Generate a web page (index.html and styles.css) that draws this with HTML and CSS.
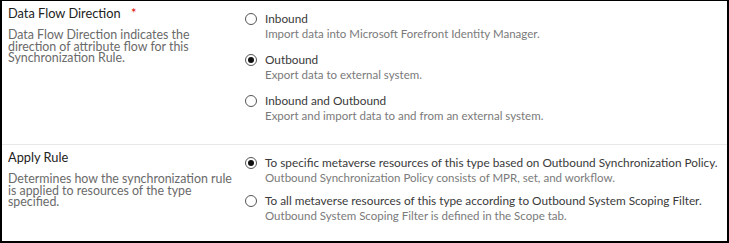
FILE: index.html
```html
<!DOCTYPE html>
<html lang="en">
<head>
    <meta charset="UTF-8">
    <title>Synchronization Rule - Scope</title>
    <link rel="stylesheet" href="styles.css">
</head>
<body>
<div class="panel">

    <div class="row row-first">
        <div class="info">
            <div class="title">Data Flow Direction <span class="req">*</span></div>
            <div class="desc">Data Flow Direction indicates the direction of attribute flow for this Synchronization Rule.</div>
        </div>
        <div class="options">
            <label class="option">
                <input type="radio" name="flow">
                <span class="option-text">
                    <span class="option-label">Inbound</span>
                    <span class="option-desc">Import data into Microsoft Forefront Identity Manager.</span>
                </span>
            </label>
            <label class="option">
                <input type="radio" name="flow" checked>
                <span class="option-text">
                    <span class="option-label">Outbound</span>
                    <span class="option-desc">Export data to external system.</span>
                </span>
            </label>
            <label class="option">
                <input type="radio" name="flow">
                <span class="option-text">
                    <span class="option-label">Inbound and Outbound</span>
                    <span class="option-desc">Export and import data to and from an external system.</span>
                </span>
            </label>
        </div>
    </div>

    <div class="row row-last">
        <div class="info">
            <div class="title">Apply Rule</div>
            <div class="desc">Determines how the synchronization rule is applied to resources of the type specified.</div>
        </div>
        <div class="options compact">
            <label class="option">
                <input type="radio" name="apply" checked>
                <span class="option-text">
                    <span class="option-label">To specific metaverse resources of this type based on Outbound Synchronization Policy.</span>
                    <span class="option-desc">Outbound Synchronization Policy consists of MPR, set, and workflow.</span>
                </span>
            </label>
            <label class="option">
                <input type="radio" name="apply">
                <span class="option-text">
                    <span class="option-label">To all metaverse resources of this type according to Outbound System Scoping Filter.</span>
                    <span class="option-desc">Outbound System Scoping Filter is defined in the Scope tab.</span>
                </span>
            </label>
        </div>
    </div>

</div>
</body>
</html>
```

FILE: styles.css
```css
body {
    margin: 0;
    padding: 0;
    background-color: #fff;
    font-family: "Segoe UI", Lato, Arial, sans-serif;
    font-size: 11.5px;
}

.panel {
    width: 725px;
    height: 240px;
    border: 2px solid #000;
    border-top-width: 1px;
    background-color: #fff;
}

/* one setting per row */
.row {
    display: flex;
    padding: 5px 0 0 6px;
    border-bottom: 1px solid #e8e8e8;
}
.row-first {
    height: 138px;
}
.row-last {
    border-bottom: none;
}

.info {
    width: 228px;
    flex-shrink: 0;
}
.title {
    color: #222;
    font-size: 12.8px;
    line-height: 14px;
}
.req {
    color: #e00000;
    margin-left: 7px;
}
.desc {
    color: #6a6a6a;
    font-size: 12.4px;
    margin-top: 9px;
    line-height: 11.5px;
}

.options {
    display: flex;
    flex-direction: column;
    gap: 11px;
    margin: 5px 0 0 9px;
}
.options.compact {
    gap: 8px;
}

.option {
    display: flex;
    align-items: flex-start;
    gap: 8px;
    cursor: pointer;
}
.option input {
    appearance: none;
    -webkit-appearance: none;
    width: 12px;
    height: 12px;
    margin: 2px 0 0 0;
    border: 1px solid #555;
    border-radius: 50%;
    background-color: #fff;
    flex-shrink: 0;
    position: relative;
}
.option input:checked::after {
    content: "";
    position: absolute;
    left: 2px;
    top: 2px;
    width: 6px;
    height: 6px;
    border-radius: 50%;
    background-color: #111;
}
.option-text {
    display: flex;
    flex-direction: column;
}
.option-label {
    color: #3a3a3a;
    font-size: 11.8px;
    line-height: 15px;
}
.option-desc {
    color: #7a7a7a;
    line-height: 14px;
    margin-top: 1px;
}
```
